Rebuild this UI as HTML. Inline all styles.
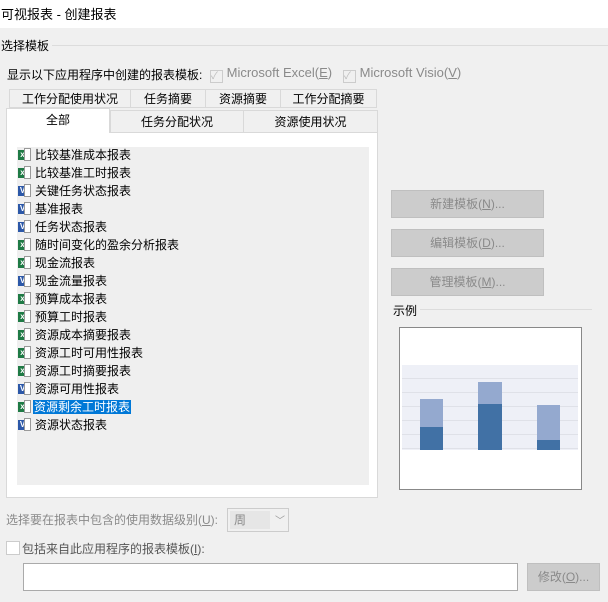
<!DOCTYPE html><html><head><meta charset="utf-8"><style>
body{margin:0;width:608px;height:602px;background:#f0f0f0;position:relative;overflow:hidden;font-family:"Liberation Sans","Noto Sans CJK SC",sans-serif;font-size:12px;color:#000}
.a{position:absolute;white-space:nowrap}
.g{color:#8a8a8a}
.tab{position:absolute;height:19px;border:1px solid #d9d9d9;background:#f0f0f0;text-align:center;line-height:19px;box-sizing:border-box}
.btn{position:absolute;background:#cccccc;border:1px solid #bfbfbf;box-sizing:border-box;color:#8a8a8a;text-align:center}
.it{position:absolute;left:18px;height:18px;line-height:18px}
.ic{display:inline-block;width:14px;height:14px;vertical-align:-3px;margin-right:3px;position:relative}
.ic i{position:absolute;left:0;top:2px;width:9px;height:10px;color:#fff;font-size:8px;font-style:normal;font-weight:bold;text-align:center;line-height:10px}
.ic b{position:absolute;left:6px;top:0;width:7px;height:13px;border:1px solid #999;background:#fff;box-sizing:border-box}
.x i{background:#1f7a45}.v i{background:#2c58a8}
.sel{background:#0078d7;color:#fff;padding:0 1px}
</style></head><body>
<div class="a" style="left:0;top:0;width:608px;height:28px;background:#fff"></div>
<div class="a" style="left:1px;top:4px;font-size:13px">可视报表 - 创建报表</div>
<div class="a" style="left:1px;top:37px">选择模板</div>
<div class="a" style="left:52px;top:45px;width:556px;height:1px;background:#dcdcdc"></div>
<div class="a" style="left:7px;top:66px">显示以下应用程序中创建的报表模板:</div>
<div class="a g" style="left:210px;top:65px;font-size:13px"><span style="display:inline-block;width:11px;height:11px;border:1px solid #ccc;vertical-align:-2px;color:#bbb;font-size:10px;line-height:11px">✓</span> Microsoft Excel(<u>E</u>)</div>
<div class="a g" style="left:343px;top:65px;font-size:13px"><span style="display:inline-block;width:11px;height:11px;border:1px solid #ccc;vertical-align:-2px;color:#bbb;font-size:10px;line-height:11px">✓</span> Microsoft Visio(<u>V</u>)</div>
<div class="tab" style="left:9px;top:89px;width:122px">工作分配使用状况</div>
<div class="tab" style="left:130px;top:89px;width:76px">任务摘要</div>
<div class="tab" style="left:205px;top:89px;width:76px">资源摘要</div>
<div class="tab" style="left:280px;top:89px;width:97px">工作分配摘要</div>
<div class="a" style="left:6px;top:132px;width:372px;height:366px;background:#fff;border:1px solid #d9d9d9;box-sizing:border-box"></div>
<div class="tab" style="left:110px;top:110px;width:134px;height:23px;line-height:22px">任务分配状况</div>
<div class="tab" style="left:243px;top:110px;width:135px;height:23px;line-height:22px">资源使用状况</div>
<div class="tab" style="left:6px;top:108px;width:104px;height:25px;background:#fff;border-bottom:none;line-height:22px">全部</div>
<div class="a" style="left:17px;top:147px;width:352px;height:338px;background:#efefef"></div>
<div class="it" style="top:146px"><span class="ic x"><i>x</i><b></b></span>比较基准成本报表</div>
<div class="it" style="top:164px"><span class="ic x"><i>x</i><b></b></span>比较基准工时报表</div>
<div class="it" style="top:182px"><span class="ic v"><i>V</i><b></b></span>关键任务状态报表</div>
<div class="it" style="top:200px"><span class="ic v"><i>V</i><b></b></span>基准报表</div>
<div class="it" style="top:218px"><span class="ic v"><i>V</i><b></b></span>任务状态报表</div>
<div class="it" style="top:236px"><span class="ic x"><i>x</i><b></b></span>随时间变化的盈余分析报表</div>
<div class="it" style="top:254px"><span class="ic x"><i>x</i><b></b></span>现金流报表</div>
<div class="it" style="top:272px"><span class="ic v"><i>V</i><b></b></span>现金流量报表</div>
<div class="it" style="top:290px"><span class="ic x"><i>x</i><b></b></span>预算成本报表</div>
<div class="it" style="top:308px"><span class="ic x"><i>x</i><b></b></span>预算工时报表</div>
<div class="it" style="top:326px"><span class="ic x"><i>x</i><b></b></span>资源成本摘要报表</div>
<div class="it" style="top:344px"><span class="ic x"><i>x</i><b></b></span>资源工时可用性报表</div>
<div class="it" style="top:362px"><span class="ic x"><i>x</i><b></b></span>资源工时摘要报表</div>
<div class="it" style="top:380px"><span class="ic v"><i>V</i><b></b></span>资源可用性报表</div>
<div class="it" style="top:398px"><span class="ic x" style="margin-right:1px"><i>x</i><b></b></span><span class="sel">资源剩余工时报表</span></div>
<div class="it" style="top:416px"><span class="ic v"><i>V</i><b></b></span>资源状态报表</div>
<div class="btn" style="left:391px;top:190px;width:153px;height:28px;line-height:26px">新建模板(<u>N</u>)...</div>
<div class="btn" style="left:391px;top:229px;width:153px;height:28px;line-height:26px">编辑模板(<u>D</u>)...</div>
<div class="btn" style="left:391px;top:268px;width:153px;height:28px;line-height:26px">管理模板(<u>M</u>)...</div>
<div class="a" style="left:393px;top:302px">示例</div>
<div class="a" style="left:420px;top:309px;width:172px;height:1px;background:#dcdcdc"></div>
<div class="a" style="left:399px;top:327px;width:183px;height:163px;background:#fff;border:1px solid #888;box-sizing:border-box"></div>
<div class="a" style="left:402px;top:365px;width:176px;height:85px;background:#eef0f7;background-image:repeating-linear-gradient(#eef0f7 0 13px,#dfe1e8 13px 14px)"></div>
<div class="a" style="left:420px;top:399px;width:23px;height:51px;background:#94a9cf"></div>
<div class="a" style="left:420px;top:427px;width:23px;height:23px;background:#4171a5"></div>
<div class="a" style="left:478px;top:382px;width:24px;height:68px;background:#94a9cf"></div>
<div class="a" style="left:478px;top:404px;width:24px;height:46px;background:#4171a5"></div>
<div class="a" style="left:537px;top:405px;width:23px;height:45px;background:#94a9cf"></div>
<div class="a" style="left:537px;top:440px;width:23px;height:10px;background:#4171a5"></div>
<div class="a g" style="left:6px;top:511px">选择要在报表中包含的使用数据级别(<u>U</u>):</div>
<div class="a" style="left:227px;top:508px;width:62px;height:24px;border:1px solid #ccc;box-sizing:border-box"><div class="a" style="left:2px;top:2px;width:40px;height:18px;background:#e6e6e6;color:#888;line-height:18px;padding-left:4px;box-sizing:border-box">周</div><div class="a" style="left:47px;top:3px;color:#999;font-size:10px">﹀</div></div>
<div class="a" style="left:6px;top:541px;width:12px;height:12px;border:1px solid #ccc;background:#fff"></div>
<div class="a" style="left:22px;top:540px;color:#555">包括来自此应用程序的报表模板(<u>I</u>):</div>
<div class="a" style="left:23px;top:563px;width:495px;height:28px;background:#fff;border:1px solid #aaa;box-sizing:border-box"></div>
<div class="btn" style="left:527px;top:563px;width:73px;height:28px;line-height:26px">修改(<u>O</u>)...</div>
</body></html>
